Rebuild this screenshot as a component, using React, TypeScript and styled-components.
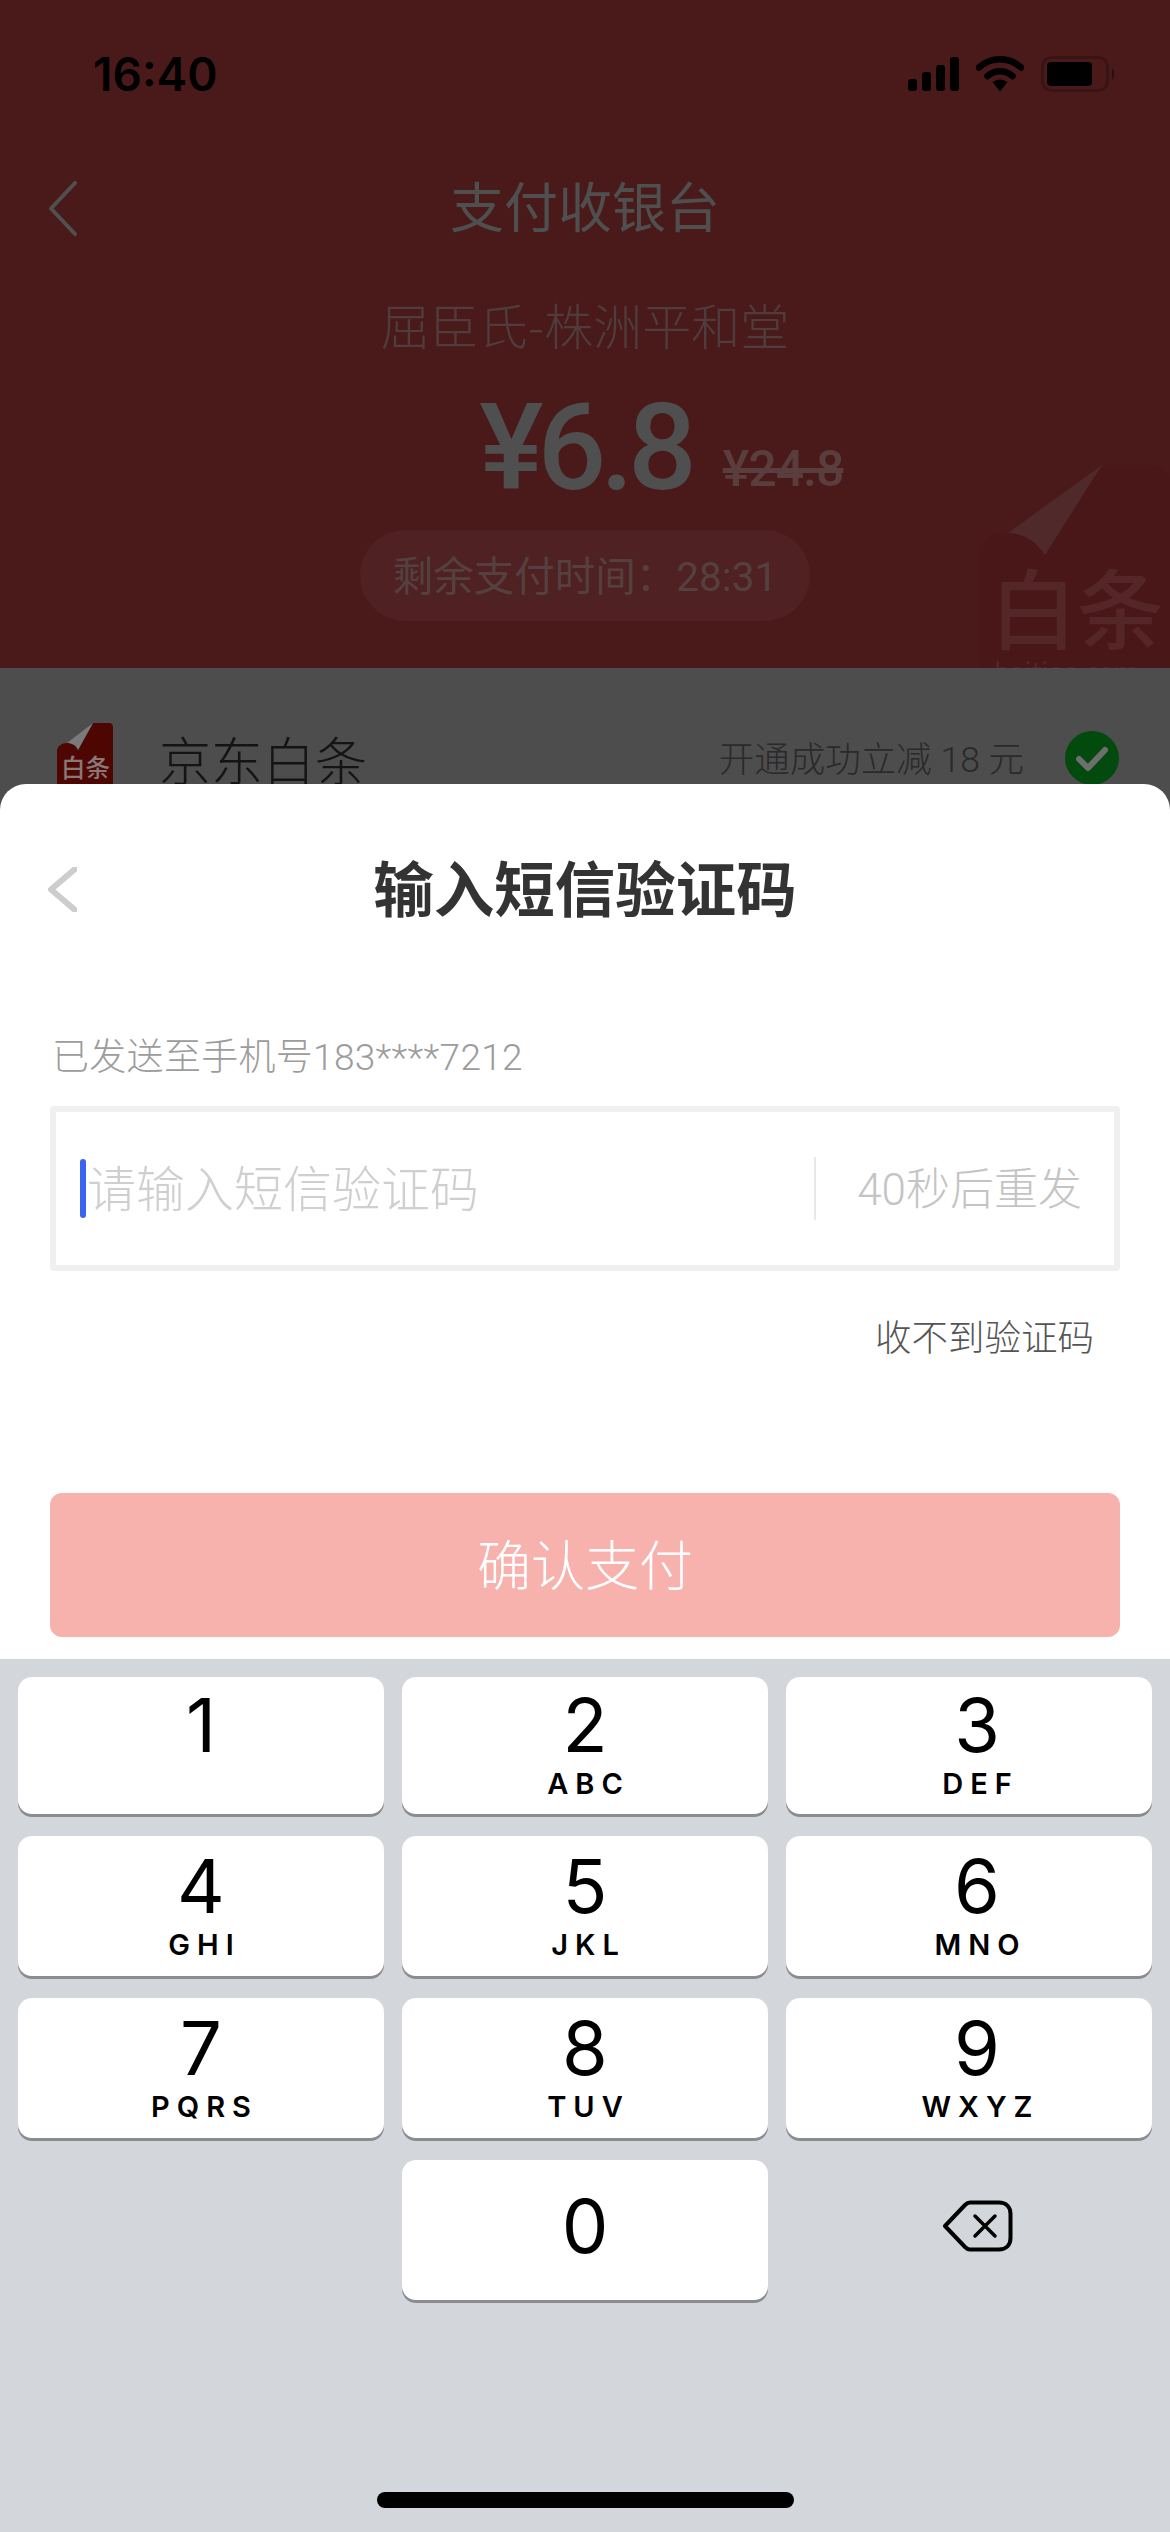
import React from "react";
import styled, { createGlobalStyle } from "styled-components";

const CJK = `"Noto Sans CJK SC", "Noto Sans", sans-serif`;
const ROBOTO_CJK = `Roboto, "Noto Sans CJK SC", sans-serif`;

const GlobalStyle = createGlobalStyle`
  html, body {
    margin: 0;
    padding: 0;
    background: #d3d6db;
  }
`;

const Screen = styled.div`
  position: relative;
  width: 1170px;
  height: 2532px;
  overflow: hidden;
  background: #4d4d4d;
  font-family: ${CJK};
`;

// 背景页面（已被遮罩压暗）
const Hero = styled.header`
  position: relative;
  height: 668px;
  overflow: hidden;
  background: #4a1a1b;
  color: #4f4f4f;
`;

const StatusBar = styled.div`
  height: 148px;
  padding: 0 54px 0 93px;
  box-sizing: border-box;
  display: flex;
  align-items: center;
  justify-content: space-between;
`;

const Time = styled.span`
  font-family: Inter, sans-serif;
  font-size: 46px;
  font-weight: 600;
  color: #000;
`;

const StatusIcons = styled.div`
  display: flex;
  align-items: center;
  gap: 17px;
`;

const NavBar = styled.div`
  height: 120px;
  padding: 0 48px;
  display: grid;
  grid-template-columns: 1fr auto 1fr;
  align-items: center;
`;

const NavTitle = styled.div`
  margin-top: -6px;
  font-size: 54px;
  line-height: 70px;
`;

const Merchant = styled.div`
  margin-top: 21px;
  font-size: 49px;
  line-height: 70px;
  text-align: center;
  font-weight: 300;
  color: #503c3c;
`;

const PriceRow = styled.div`
  margin-top: 29px;
  height: 120px;
  display: grid;
  grid-template-columns: 1fr auto 1fr;
  align-items: baseline;
`;

const Price = styled.div`
  grid-column: 2;
  font-family: Roboto, sans-serif;
  font-size: 121px;
  line-height: 120px;
  font-weight: 500;
  letter-spacing: -6px;
`;

const OldPrice = styled.div`
  margin-left: 32px;
  font-family: Roboto, sans-serif;
  font-size: 50px;
  font-weight: 500;
  letter-spacing: -1px;
  color: #5a3e3e;
  text-decoration: line-through;
  transform: translateY(-3px);
`;

const CountdownPill = styled.div`
  width: 450px;
  height: 91px;
  margin: 22px auto 0;
  padding-bottom: 5px;
  box-sizing: border-box;
  border-radius: 46px;
  background: #502122;
  display: flex;
  align-items: center;
  justify-content: center;
  font-family: ${ROBOTO_CJK};
  font-size: 40.500px;
  color: #54403f;
`;

const Watermark = styled.svg`
  position: absolute;
  left: 970px;
  top: 455px;
`;

const PayRow = styled.div`
  height: 116px;
  padding: 55px 51px 0 57px;
  display: flex;
  align-items: flex-start;
`;

const BankName = styled.div`
  margin-left: 46px;
  font-size: 52px;
  line-height: 72px;
  font-weight: 300;
  color: #141414;
`;

const Promo = styled.div`
  margin-left: auto;
  font-family: ${ROBOTO_CJK};
  font-size: 35.500px;
  line-height: 74px;
  font-weight: 300;
  color: #2a2a2a;
`;

const CheckBadge = styled.svg`
  margin: 8px 0 0 41px;
`;

// 验证码弹层
const Sheet = styled.section`
  position: absolute;
  left: 0;
  right: 0;
  top: 784px;
  bottom: 0;
  display: flex;
  flex-direction: column;
  border-radius: 26px 26px 0 0;
  overflow: hidden;
  background: #fff;
`;

const SheetHead = styled.div`
  height: 210px;
  padding: 0 48px;
  display: grid;
  grid-template-columns: 1fr auto 1fr;
  align-items: center;
`;

const SheetTitle = styled.h2`
  margin: -6px 0 0;
  font-size: 60.500px;
  line-height: 80px;
  font-weight: 700;
  color: #333;
`;

const SentHint = styled.div`
  margin: 34px 0 0 52px;
  font-family: ${ROBOTO_CJK};
  font-size: 37px;
  line-height: 60px;
  font-weight: 300;
  letter-spacing: 0.3px;
  color: #9c9c9c;
`;

const CodeBox = styled.div`
  height: 165px;
  margin: 18px 50px 0;
  padding: 0 32px 0 24px;
  box-sizing: border-box;
  border: 6px solid #f0f0f0;
  border-radius: 4px;
  display: flex;
  align-items: center;
`;

const Caret = styled.span`
  width: 6px;
  height: 59px;
  border-radius: 3px;
  background: #3b64ee;
`;

const Placeholder = styled.span`
  flex: 1;
  margin-left: 1px;
  padding-bottom: 6px;
  font-size: 49px;
  font-weight: 300;
  color: #cfcfcf;
`;

const ResendGroup = styled.span`
  height: 63px;
  padding: 0 0 6px 41px;
  box-sizing: border-box;
  border-left: 2px solid #e8e8e8;
  display: flex;
  align-items: center;
  font-family: ${ROBOTO_CJK};
  font-size: 44px;
  font-weight: 300;
  color: #c4c4c4;
`;

const NoCodeLink = styled.div`
  margin: 38px 76px 0 0;
  text-align: right;
  font-size: 36.500px;
  line-height: 54px;
  font-weight: 300;
  color: #555;
`;

const ConfirmButton = styled.button`
  height: 144px;
  margin: 130px 50px 0;
  padding: 0 0 6px;
  border: 0;
  border-radius: 12px;
  background: #f7b2ae;
  color: #fff;
  font-family: ${CJK};
  font-size: 54px;
  font-weight: 300;
`;

const Keyboard = styled.div`
  margin-top: 22px;
  flex: 1;
  padding: 18px 18px 0;
  background: #d3d6db;
  position: relative;
  display: grid;
  grid-template-columns: repeat(3, 366px);
  grid-template-rows: 137px repeat(3, 140px);
  column-gap: 18px;
  row-gap: 22px;
  align-content: start;
`;

const Key = styled.div<{ $nudge?: boolean; $center?: boolean }>`
  box-sizing: border-box;
  padding-left: ${(p) => (p.$nudge ? "16px" : "0")};
  border-radius: 14px;
  background: #fff;
  box-shadow: 0 3px 0 #8b8c90;
  display: flex;
  flex-direction: column;
  align-items: center;
  justify-content: ${(p) => (p.$center ? "center" : "flex-start")};
  color: #000;
  font-family: Inter, sans-serif;
`;

const Digit = styled.span<{ $top: number }>`
  margin-top: ${(p) => p.$top}px;
  font-size: 74px;
  line-height: 90px;
`;

const Letters = styled.span`
  margin-top: -3px;
  font-size: 29px;
  line-height: 34px;
  font-weight: 600;
  letter-spacing: 7px;
  padding-left: 7px;
`;

const BlankKey = styled.div<{ $nudge?: boolean }>`
  padding: 0 0 8px ${(p) => (p.$nudge ? "18px" : "0")};
  display: flex;
  align-items: center;
  justify-content: center;
`;

const HomeIndicator = styled.div`
  position: absolute;
  left: 377px;
  bottom: 24px;
  width: 417px;
  height: 16px;
  border-radius: 8px;
  background: #000;
`;

const KEYS = [
  ["1", ""],
  ["2", "ABC"],
  ["3", "DEF"],
  ["4", "GHI"],
  ["5", "JKL"],
  ["6", "MNO"],
  ["7", "PQRS"],
  ["8", "TUV"],
  ["9", "WXYZ"],
];

const Chevron = ({ width, height, color, stroke }: { width: number; height: number; color: string; stroke: number }) => (
  <svg width={width} height={height} viewBox={`0 0 ${width} ${height}`} fill="none">
    <path
      d={`M${width - 2} 2 L3 ${height / 2} L${width - 2} ${height - 2}`}
      stroke={color}
      strokeWidth={stroke}
      strokeLinecap="round"
      strokeLinejoin="round"
    />
  </svg>
);

const SignalIcon = () => (
  <svg width="51" height="34" viewBox="0 0 51 34" fill="#000">
    <rect x="0" y="22" width="9" height="12" rx="3" />
    <rect x="14" y="15" width="9" height="19" rx="3" />
    <rect x="28" y="8" width="9" height="26" rx="3" />
    <rect x="42" y="0" width="9" height="34" rx="3" />
  </svg>
);

const WifiIcon = () => (
  <svg width="48" height="36" viewBox="0 0 48 36" fill="none">
    <path d="M3 11.5 C15 0.5 33 0.5 45 11.5" stroke="#000" strokeWidth="6.5" strokeLinecap="round" />
    <path d="M11.5 20 C18.5 13.5 29.5 13.5 36.5 20" stroke="#000" strokeWidth="6.5" strokeLinecap="round" />
    <path d="M16.5 26 C21 22.5 27 22.5 31.5 26 L24 35.5 Z" fill="#000" />
  </svg>
);

const BatteryIcon = () => (
  <svg width="75" height="36" viewBox="0 0 75 36" fill="none">
    <rect x="1.5" y="1.5" width="65" height="33" rx="9" stroke="#3a1415" strokeWidth="3" />
    <rect x="6" y="6" width="45" height="24" rx="4" fill="#000" />
    <path d="M71 12 C74 14 74 22 71 24 Z" fill="#2c0f10" />
  </svg>
);

const BaitiaoWatermark = () => (
  <Watermark width="200" height="240" viewBox="0 0 200 240">
    <path d="M10 240 V100 C10 85 22 78 38 78 C52 78 66 86 75 100 L130 12 H185 C195 12 200 18 200 28 V240 Z" fill="#4a1718" />
    <path d="M38 78 L132 10 L75 100 C66 86 52 78 38 78 Z" fill="#502a2b" />
    <text x="20" y="188" fontFamily={CJK} fontSize="87" fontWeight="500" fill="#542628">
      白条
    </text>
    <text x="24" y="226" fontFamily={CJK} fontSize="26" fill="#542628">
      baitiao.com
    </text>
  </Watermark>
);

const BaitiaoLogo = () => (
  <svg width="56" height="61" viewBox="0 0 56 61">
    <path d="M0 61 V28 C0 23 5 20 10 20 C15 20 19 22 21 27 L36 0 H52 C55 0 56 2 56 4 V61 Z" fill="#4e0603" />
    <path d="M10 20 L36 0 L21 27 C19 22 15 20 10 20 Z" fill="#7a7a7a" />
    <text x="4" y="54" fontFamily={CJK} fontSize="24.500" fontWeight="500" fill="#8a7878">
      白条
    </text>
  </svg>
);

const BackspaceIcon = () => (
  <svg width="70" height="52" viewBox="0 0 70 52" fill="none" stroke="#000" strokeLinecap="round" strokeLinejoin="round">
    <path d="M2 26 L22 5 C23.5 3.5 25 2.5 27 2.5 H56 C63 2.5 67.500 7 67.500 14 V38 C67.500 45 63 49.500 56 49.500 H27 C25 49.500 23.500 48.500 22 47 Z" strokeWidth="4" />
    <path d="M32 16 L52 36 M52 16 L32 36" strokeWidth="3.500" />
  </svg>
);

export default function App() {
  return (
    <Screen>
      <GlobalStyle />
      <Hero>
        <BaitiaoWatermark />
        <StatusBar>
          <Time>16:40</Time>
          <StatusIcons>
            <SignalIcon />
            <WifiIcon />
            <BatteryIcon />
          </StatusIcons>
        </StatusBar>
        <NavBar>
          <Chevron width={29} height={55} color="#505050" stroke={4} />
          <NavTitle>支付收银台</NavTitle>
        </NavBar>
        <Merchant>屈臣氏-株洲平和堂</Merchant>
        <PriceRow>
          <Price>¥6.8</Price>
          <OldPrice>¥24.8</OldPrice>
        </PriceRow>
        <CountdownPill>剩余支付时间：28:31</CountdownPill>
      </Hero>
      <PayRow>
        <BaitiaoLogo />
        <BankName>京东白条</BankName>
        <Promo>开通成功立减 18 元</Promo>
        <CheckBadge width="54" height="54" viewBox="0 0 54 54" fill="none">
          <circle cx="27" cy="27" r="27" fill="#034a0f" />
          <path d="M14 28 L23 37 L40 19" stroke="#6e6e6e" strokeWidth="6" strokeLinecap="round" strokeLinejoin="round" />
        </CheckBadge>
      </PayRow>

      <Sheet>
        <SheetHead>
          <Chevron width={29} height={45} color="#cdcdcd" stroke={6} />
          <SheetTitle>输入短信验证码</SheetTitle>
        </SheetHead>
        <SentHint>已发送至手机号183****7212</SentHint>
        <CodeBox>
          <Caret />
          <Placeholder>请输入短信验证码</Placeholder>
          <ResendGroup>40秒后重发</ResendGroup>
        </CodeBox>
        <NoCodeLink>收不到验证码</NoCodeLink>
        <ConfirmButton>确认支付</ConfirmButton>
        <Keyboard>
          {KEYS.map(([digit, letters], i) => (
            <Key key={digit} $nudge={i % 3 === 2}>
              <Digit $top={i < 3 ? 3 : 5}>{digit}</Digit>
              {letters && <Letters>{letters}</Letters>}
            </Key>
          ))}
          <BlankKey />
          <Key $center>
            <Digit $top={-8}>0</Digit>
          </Key>
          <BlankKey $nudge>
            <BackspaceIcon />
          </BlankKey>
          <HomeIndicator />
        </Keyboard>
      </Sheet>
    </Screen>
  );
}
